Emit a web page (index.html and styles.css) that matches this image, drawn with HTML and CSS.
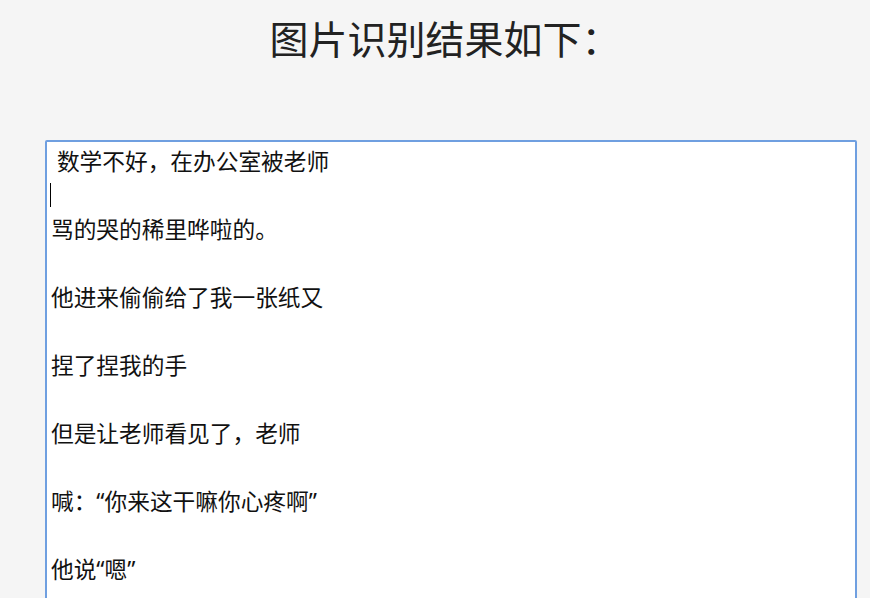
FILE: index.html
```html
<!DOCTYPE html>
<html lang="zh-CN">
<head>
    <meta charset="UTF-8">
    <title>图片识别结果</title>
    <link rel="stylesheet" href="styles.css">
</head>
<body>
    <div class="page">
        <h1 class="title">图片识别结果如下：</h1>
        <div class="result-wrap">
            <textarea class="result-box"> 数学不好，在办公室被老师

骂的哭的稀里哗啦的。

他进来偷偷给了我一张纸又

捏了捏我的手

但是让老师看见了，老师

喊：“你来这干嘛你心疼啊”

他说“嗯”

</textarea>
            <span class="caret"></span>
        </div>
    </div>
</body>
</html>
```

FILE: styles.css
```css
* {
    margin: 0;
    padding: 0;
    box-sizing: border-box;
}

body {
    background-color: #f5f5f5;
    font-family: 'Noto Sans CJK SC', 'Noto Sans', sans-serif;
    color: #222;
}

.page {
    display: flex;
    flex-direction: column;
    padding-left: 45px;
}

.title {
    font-size: 39px;
    font-weight: 400;
    line-height: 40px;
    margin-top: 17px;
    text-align: center;
    width: 800px;
    color: #222;
}

.result-wrap {
    position: relative;
    margin-top: 83px;
    width: 812px;
}

.result-box {
    display: block;
    width: 100%;
    height: 520px;
    border: 2px solid #6f9fe0;
    border-radius: 2px;
    background-color: #fff;
    padding: 3px 4px;
    font-family: 'Noto Sans', 'Noto Sans CJK SC', sans-serif;
    font-size: 22.7px;
    line-height: 34px;
    color: #111;
    resize: none;
    outline: none;
    overflow: hidden;
}

.caret {
    position: absolute;
    left: 5px;
    top: 43px;
    width: 1px;
    height: 24px;
    background-color: #000;
}
```
